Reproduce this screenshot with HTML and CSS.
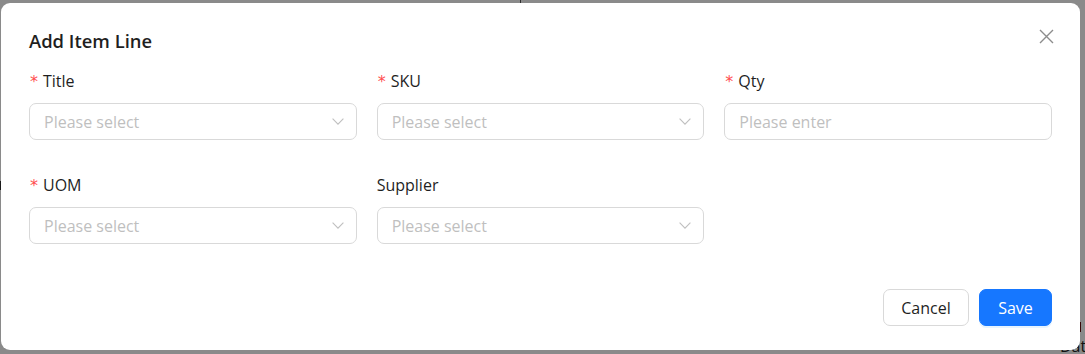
FILE: index.html
```html
<!DOCTYPE html>
<html lang="en">
<head>
<meta charset="utf-8">
<title>Add Item Line</title>
<link rel="stylesheet" href="styles.css">
</head>
<body>
<div class="page">
  <div class="page-line"></div>
  <div class="page-mark"></div>
  <div class="page-bar"></div>
  <div class="page-text">Dat</div>
  <div class="backdrop"></div>
  <div class="modal" role="dialog">
    <button class="close" aria-label="Close">
      <svg width="15" height="15" viewBox="0 0 15 15"><path d="M1 1L14 14M14 1L1 14" stroke="#8c8c8c" stroke-width="1.4" fill="none"/></svg>
    </button>
    <div class="modal-title">Add Item Line</div>
    <form class="form">
      <div class="item">
        <label class="label"><span class="req">*</span>Title</label>
        <div class="control select"><span class="ph">Please select</span>
          <svg class="arrow" width="12" height="7" viewBox="0 0 12 7"><path d="M0.6 0.6L6 6.1L11.4 0.6" stroke="#bfbfbf" stroke-width="1.1" fill="none"/></svg>
        </div>
      </div>
      <div class="item">
        <label class="label"><span class="req">*</span>SKU</label>
        <div class="control select"><span class="ph">Please select</span>
          <svg class="arrow" width="12" height="7" viewBox="0 0 12 7"><path d="M0.6 0.6L6 6.1L11.4 0.6" stroke="#bfbfbf" stroke-width="1.1" fill="none"/></svg>
        </div>
      </div>
      <div class="item">
        <label class="label"><span class="req">*</span>Qty</label>
        <div class="control"><span class="ph">Please enter</span></div>
      </div>
      <div class="item">
        <label class="label"><span class="req">*</span>UOM</label>
        <div class="control select"><span class="ph">Please select</span>
          <svg class="arrow" width="12" height="7" viewBox="0 0 12 7"><path d="M0.6 0.6L6 6.1L11.4 0.6" stroke="#bfbfbf" stroke-width="1.1" fill="none"/></svg>
        </div>
      </div>
      <div class="item">
        <label class="label">Supplier</label>
        <div class="control select"><span class="ph">Please select</span>
          <svg class="arrow" width="12" height="7" viewBox="0 0 12 7"><path d="M0.6 0.6L6 6.1L11.4 0.6" stroke="#bfbfbf" stroke-width="1.1" fill="none"/></svg>
        </div>
      </div>
    </form>
    <div class="footer">
      <button class="btn btn-default" type="button">Cancel</button>
      <button class="btn btn-primary" type="button">Save</button>
    </div>
  </div>
</div>
</body>
</html>
```

FILE: styles.css
```css
* { box-sizing: border-box; }
html, body { margin: 0; padding: 0; }
body {
  width: 1085px;
  height: 354px;
  overflow: hidden;
  background: #ffffff;
  font-family: "Open Sans", "Noto Sans", sans-serif;
  color: #1f1f1f;
}
.page {
  position: relative;
  width: 1085px;
  height: 354px;
  padding: 3px 5px 4px 1px;
}
.page-line {
  position: absolute;
  left: 520px;
  top: 0;
  width: 1px;
  height: 10px;
  background: #555;
}
.page-mark {
  position: absolute;
  left: 0;
  top: 181px;
  width: 1px;
  height: 9px;
  background: #333;
}
.page-bar {
  position: absolute;
  left: 1077px;
  top: 322px;
  width: 4px;
  height: 10px;
  background: #6a0d0d;
}
.page-text {
  position: absolute;
  left: 1060px;
  top: 336px;
  font-size: 16px;
  line-height: 20px;
  color: #222;
}
.backdrop {
  position: absolute;
  inset: 0;
  background: rgba(0, 0, 0, 0.46);
}
.modal {
  position: relative;
  height: 347px;
  background: #fff;
  border-radius: 9px;
  padding: 24px 28px 24px;
  display: flex;
  flex-direction: column;
}
.close {
  position: absolute;
  top: 26px;
  right: 26px;
  width: 15px;
  height: 15px;
  padding: 0;
  border: 0;
  background: none;
  display: flex;
}
.modal-title {
  font-size: 18.4px;
  font-weight: 600;
  line-height: 28px;
  height: 28px;
  color: #1f1f1f;
}
.form {
  margin-top: 14px;
  display: grid;
  grid-template-columns: repeat(3, 1fr);
  column-gap: 20px;
  row-gap: 33px;
}
.item { display: flex; flex-direction: column; }
.label {
  height: 25px;
  line-height: 25px;
  margin-bottom: 9px;
  font-size: 16px;
  color: #1f1f1f;
  display: flex;
  align-items: center;
}
.req {
  color: #ff4d4f;
  font-family: "DejaVu Sans", sans-serif;
  font-size: 16px;
  margin-right: 5px;
  margin-left: 1px;
}
.control {
  height: 37px;
  border: 1px solid #d9d9d9;
  border-radius: 7px;
  padding: 0 12px 0 14px;
  display: flex;
  align-items: center;
  justify-content: space-between;
  background: #fff;
}
.ph {
  font-size: 16px;
  color: #bfbfbf;
}
.footer {
  margin-top: auto;
  display: flex;
  justify-content: flex-end;
  gap: 10px;
}
.btn {
  height: 37px;
  font-family: inherit;
  font-size: 16px;
  border-radius: 7px;
  padding: 0 17px;
  cursor: pointer;
}
.btn-default {
  width: 86px;
  background: #fff;
  border: 1px solid #d9d9d9;
  color: #1f1f1f;
}
.btn-primary {
  width: 73px;
  background: #1677ff;
  border: 1px solid #1677ff;
  color: #fff;
  box-shadow: 0 2px 0 rgba(5, 145, 255, 0.1);
}
```
